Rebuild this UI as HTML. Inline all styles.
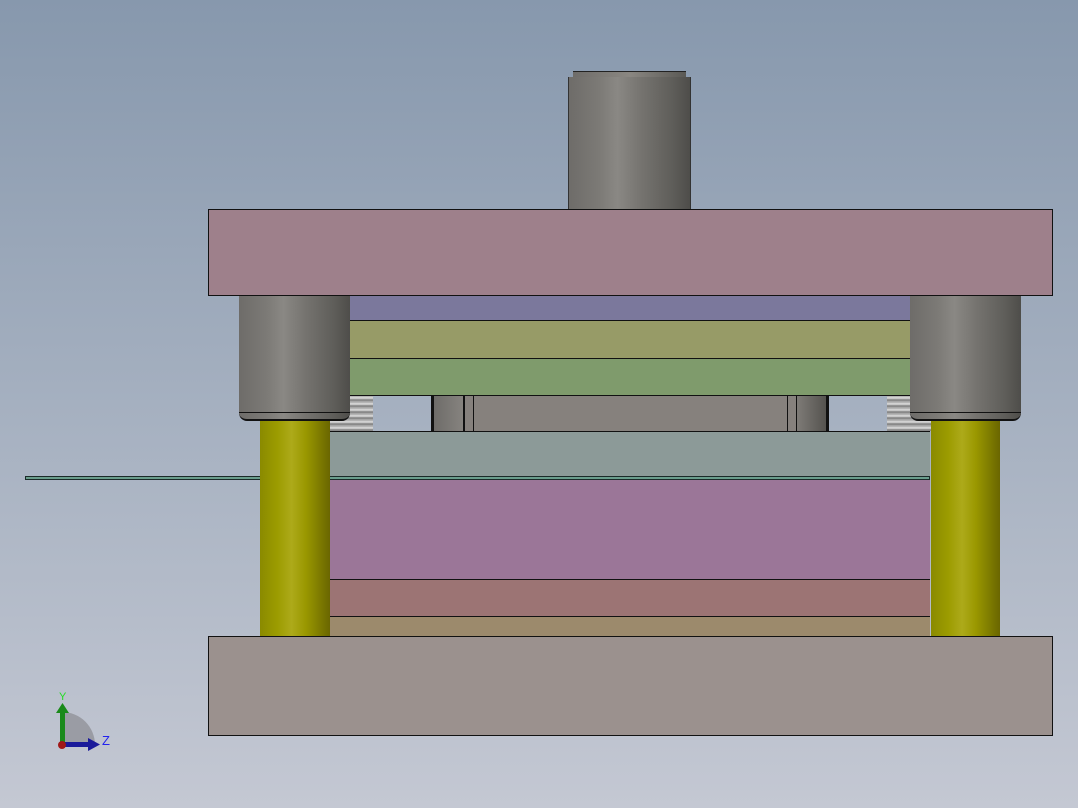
<!DOCTYPE html>
<html><head><meta charset="utf-8"><style>
html,body{margin:0;padding:0}
body{width:1078px;height:808px;position:relative;overflow:hidden;background:linear-gradient(#8798ad 0%,#a5b0c0 50%,#c4c8d3 100%);font-family:"Liberation Sans",sans-serif}
.a{position:absolute;box-sizing:border-box}
.b{border:1px solid #111}
.cyl{background:linear-gradient(90deg,#6e6c69 0%,#7c7a76 25%,#8a8884 40%,#75736f 60%,#5f5e5a 85%,#4e4d4a 100%)}
.post{background:linear-gradient(90deg,#8a8a00 0%,#9c9c00 25%,#adaa1a 45%,#9a9800 65%,#777400 90%,#6a6600 100%)}
.spring{background:repeating-linear-gradient(#a6a6a6 0,#e0e0e0 2px,#7a7a7a 4px,#b5b5b5 6px)}
</style></head><body>
<div class="a" style="left:573px;top:71px;width:113px;height:7px;background:linear-gradient(90deg,#6e6c69,#8a8782,#5a5955);border-top:1px solid #222"></div>
<div class="a cyl" style="left:568px;top:77px;width:123px;height:133px;border-left:1px solid #333;border-right:1px solid #333"></div>
<div class="a b" style="left:208px;top:209px;width:845px;height:87px;background:#9e808b"></div>
<div class="a" style="left:350px;top:296px;width:560px;height:25px;background:#7b789c"></div>
<div class="a" style="left:350px;top:320px;width:560px;height:39px;background:#979b67;border-top:1px solid #111"></div>
<div class="a" style="left:350px;top:358px;width:560px;height:38px;background:#7f9b6c;border-top:1px solid #111"></div>
<div class="a" style="left:431px;top:395px;width:398px;height:37px;background:#86817d;border-left:3px solid #111;border-right:3px solid #111;border-top:1px solid #111"></div>
<div class="a" style="left:434px;top:396px;width:30px;height:36px;background:linear-gradient(90deg,#6e6c69,#86837f);border-right:1px solid #111"></div>
<div class="a" style="left:464px;top:396px;width:10px;height:36px;border-right:1px solid #111;border-left:1px solid #111"></div>
<div class="a" style="left:787px;top:396px;width:10px;height:36px;border-right:1px solid #111;border-left:1px solid #111"></div>
<div class="a" style="left:797px;top:396px;width:29px;height:36px;background:linear-gradient(90deg,#7e7b77,#55534f)"></div>
<div class="a" style="left:350px;top:395px;width:81px;height:1px;background:#111"></div>
<div class="a" style="left:829px;top:395px;width:81px;height:1px;background:#111"></div>
<div class="a spring" style="left:330px;top:396px;width:43px;height:35px"></div>
<div class="a spring" style="left:887px;top:396px;width:44px;height:35px"></div>
<div class="a" style="left:330px;top:431px;width:600px;height:47px;background:#8c9a98;border-top:1px solid #111"></div>
<div class="a" style="left:25px;top:476px;width:905px;height:4px;background:#6a9d8c;border:1px solid #1a2a28"></div>
<div class="a" style="left:330px;top:480px;width:600px;height:100px;background:#9b7698"></div>
<div class="a" style="left:330px;top:579px;width:600px;height:38px;background:#9c7474;border-top:1px solid #111"></div>
<div class="a" style="left:330px;top:616px;width:600px;height:21px;background:#9c8a6c;border-top:1px solid #111"></div>
<div class="a post" style="left:260px;top:418px;width:70px;height:219px"></div>
<div class="a post" style="left:931px;top:418px;width:69px;height:219px"></div>
<div class="a cyl" style="left:239px;top:296px;width:111px;height:125px;border-radius:0 0 8px 8px;border-bottom:2px solid #111"></div>
<div class="a" style="left:239px;top:412px;width:111px;height:1px;background:#111"></div>
<div class="a cyl" style="left:910px;top:296px;width:111px;height:125px;border-radius:0 0 8px 8px;border-bottom:2px solid #111"></div>
<div class="a" style="left:910px;top:412px;width:111px;height:1px;background:#111"></div>
<div class="a b" style="left:208px;top:636px;width:845px;height:100px;background:#9b918e"></div>
<svg class="a" style="left:50px;top:685px" width="70" height="70" viewBox="0 0 70 70">
<path d="M12 60 L12 27 A33 33 0 0 1 45 60 Z" fill="#9a9ca4"/>
<rect x="10" y="26" width="5" height="34" fill="#1a8a1a"/>
<path d="M6 28 L12.5 18 L19 28 Z" fill="#1a8a1a"/>
<rect x="12" y="57" width="28" height="5" fill="#1a1a9a"/>
<path d="M38 53 L50 59.5 L38 66 Z" fill="#1a1a9a"/>
<circle cx="12" cy="60" r="4" fill="#a01818"/>
<text x="9" y="15" font-size="11" fill="#22dd22" font-family="Liberation Sans">Y</text>
<text x="52" y="60" font-size="13" fill="#2222ee" font-family="Liberation Sans">Z</text>
</svg>
</body></html>
